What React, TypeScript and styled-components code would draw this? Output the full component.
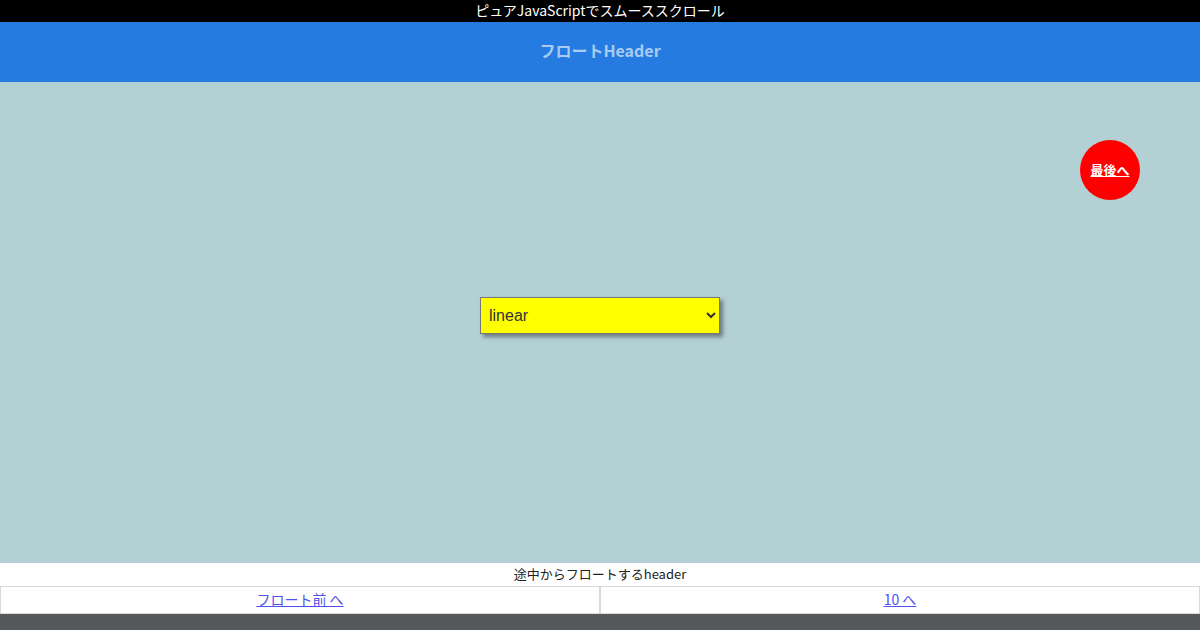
import React from "react";
import styled, { createGlobalStyle } from "styled-components";

const Global = createGlobalStyle`
  html, body { margin: 0; padding: 0; }
  body { font-family: "Noto Sans CJK JP", "Noto Sans", sans-serif; background: #fff; }
  #root { width: 1200px; height: 630px; overflow: hidden; }
`;

const Page = styled.div`
  display: flex;
  flex-direction: column;
  width: 1200px;
  height: 630px;
`;

const TopBar = styled.div`
  height: 22px;
  background: #000;
  color: #fff;
  font-size: 14px;
  line-height: 21px;
  text-align: center;
`;

const Header = styled.header`
  height: 60px;
  box-sizing: border-box;
  padding-bottom: 4px;
  background: #257be0;
  color: #a9cbf1;
  font-weight: bold;
  font-size: 16px;
  display: flex;
  align-items: center;
  justify-content: center;
`;

const Main = styled.main`
  position: relative;
  flex: 1;
  background: #b3d0d5;
  display: flex;
  align-items: center;
  justify-content: center;
`;

const Select = styled.select`
  width: 240px;
  height: 37px;
  margin-top: -14px;
  background: #ffff00;
  border: 1px solid #767676;
  border-radius: 0;
  box-shadow: 3px 3px 4px #6d7b7e;
  font-family: "Liberation Sans", Arial, sans-serif;
  font-size: 16px;
  color: #333;
  padding: 0 4px;
`;

const ToLast = styled.a`
  position: absolute;
  top: 58px;
  right: 60px;
  width: 60px;
  height: 60px;
  box-sizing: border-box;
  padding-bottom: 2px;
  border-radius: 50%;
  background: #ff0000;
  color: #fff;
  font-weight: bold;
  font-size: 13px;
  display: flex;
  align-items: center;
  justify-content: center;
  text-decoration: underline;
`;

const Caption = styled.div`
  height: 23px;
  line-height: 21px;
  font-size: 13px;
  color: #222;
  text-align: center;
  background: #fff;
`;

const NavRow = styled.div`
  display: grid;
  grid-template-columns: 1fr 1fr;
  background: #fff;
`;

const NavCell = styled.div`
  height: 26px;
  box-sizing: content-box;
  border: 1px solid #d9d9d9;
  display: flex;
  align-items: center;
  justify-content: center;
  font-size: 14px;
  line-height: 1;
  padding-bottom: 0;
`;

const NavLink = styled.a`
  color: #5050f0;
  text-decoration: underline;
  margin-top: -3px;
`;

const Bottom = styled.div`
  height: 16px;
  background: #55595c;
`;

export default function App() {
  return (
    <Page>
      <Global />
      <TopBar>ピュアJavaScriptでスムーススクロール</TopBar>
      <Header>フロートHeader</Header>
      <Main>
        <Select defaultValue="linear">
          <option value="linear">linear</option>
          <option value="easeInQuad">easeInQuad</option>
          <option value="easeOutQuad">easeOutQuad</option>
        </Select>
        <ToLast href="#">最後へ</ToLast>
      </Main>
      <Caption>途中からフロートするheader</Caption>
      <NavRow>
        <NavCell><NavLink href="#">フロート前 へ</NavLink></NavCell>
        <NavCell><NavLink href="#">10 へ</NavLink></NavCell>
      </NavRow>
      <Bottom />
    </Page>
  );
}
